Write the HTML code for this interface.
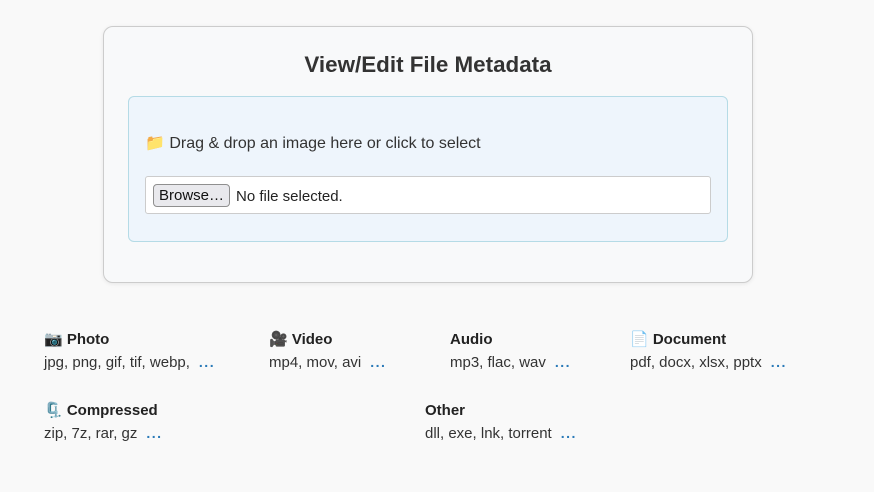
<!DOCTYPE html>
<html><head><meta charset="utf-8"><style>
body{margin:0;width:874px;height:492px;background:#f9f9f9;font-family:"Liberation Sans","DejaVu Sans",sans-serif;color:#333;position:relative;overflow:hidden}
.card{position:absolute;left:103px;top:26px;width:648px;height:255px;border:1px solid #ccc;border-radius:10px;background:#f8f9fa;box-shadow:0 1px 4px rgba(0,0,0,.08)}
h1{position:absolute;left:103px;width:650px;top:52px;margin:0;text-align:center;font-size:22.4px;font-weight:bold;color:#333}
.drop{position:absolute;left:128px;top:96px;width:598px;height:144px;border:1px solid #b5dbe6;border-radius:6px;background:#eef5fc}
.dt{position:absolute;left:145px;top:133px;font-size:16px;color:#333}
.inp{position:absolute;left:145px;top:176px;width:564px;height:36px;border:1px solid #ccc;border-radius:3px;background:#fff}
.btn{position:absolute;left:7px;top:7px;height:23px;width:77px;border:1px solid #8f8f8f;border-radius:4px;background:#e9e9ed;font-size:15px;line-height:22px;text-align:center;color:#111;box-sizing:border-box}
.nf{position:absolute;left:90px;top:11px;font-size:15px;color:#222}
.c{position:absolute;font-size:15px;line-height:18px}
.c b{display:block;color:#222;margin-bottom:4px;height:18px}
.c span{color:#333}
.c span.d{color:#2a7ab8;font-weight:bold;margin-left:9px;font-size:14px;letter-spacing:1.5px}
</style></head><body>
<div class="card"></div>
<h1>View/Edit File Metadata</h1>
<div class="drop"></div>
<div class="dt">📁 Drag &amp; drop an image here or click to select</div>
<div class="inp"><div class="btn">Browse…</div><div class="nf">No file selected.</div></div>
<div class="c" style="left:44px;top:331px"><b>📷 Photo</b><span>jpg, png, gif, tif, webp,</span><span class="d">...</span></div>
<div class="c" style="left:269px;top:331px"><b>🎥 Video</b><span>mp4, mov, avi</span><span class="d">...</span></div>
<div class="c" style="left:450px;top:331px"><b>Audio</b><span>mp3, flac, wav</span><span class="d">...</span></div>
<div class="c" style="left:630px;top:331px"><b>📄 Document</b><span>pdf, docx, xlsx, pptx</span><span class="d">...</span></div>
<div class="c" style="left:44px;top:402px"><b>🗜️ Compressed</b><span>zip, 7z, rar, gz</span><span class="d">...</span></div>
<div class="c" style="left:425px;top:402px"><b>Other</b><span>dll, exe, lnk, torrent</span><span class="d">...</span></div>
</body></html>
